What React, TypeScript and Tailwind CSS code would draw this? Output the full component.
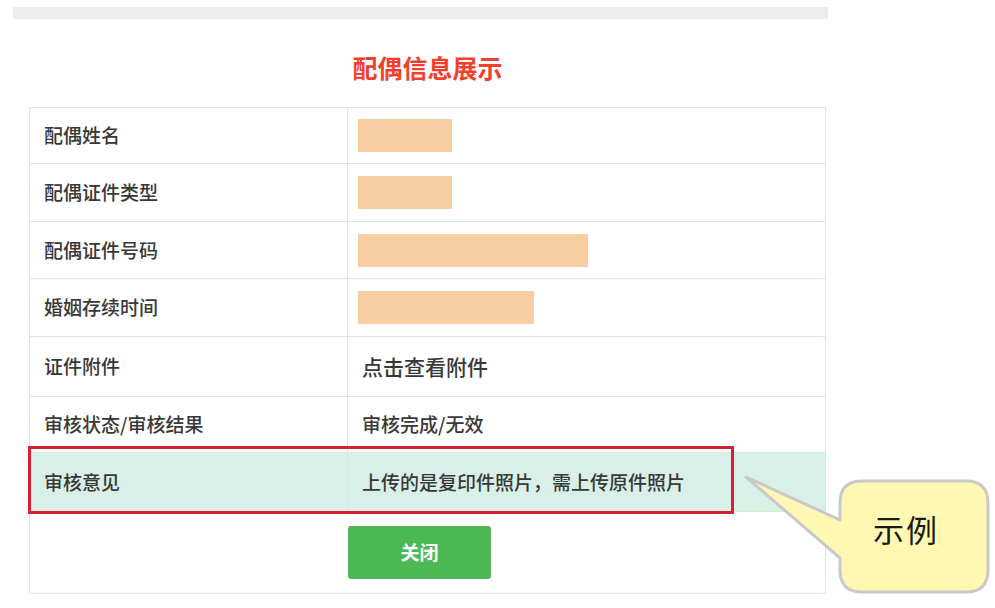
import React from 'react'

const rows = [
  { label: '配偶姓名', h: 'h-[56px]', block: 'w-[94px]' },
  { label: '配偶证件类型', h: 'h-[58px]', block: 'w-[94px]' },
  { label: '配偶证件号码', h: 'h-[57px]', block: 'w-[230px]' },
  { label: '婚姻存续时间', h: 'h-[58px]', block: 'w-[176px]' },
  { label: '证件附件', h: 'h-[60px]', text: '点击查看附件', big: true },
  { label: '审核状态/审核结果', h: 'h-[56px]', text: '审核完成/无效' },
  { label: '审核意见', h: 'h-[59px]', text: '上传的是复印件照片，需上传原件照片', hl: true },
]

export default function App() {
  return (
    <div className="relative w-[995px] h-[608px] overflow-hidden bg-white font-['Microsoft_YaHei','Noto_Sans_CJK_SC',sans-serif] text-[#333]">
      <div className="ml-[13px] mt-[7px] w-[815px]">
        <div className="h-[12px] bg-[#ececec]" />
        <div className="h-[88px] pt-[10px] pl-[14px] flex items-center justify-center text-[25px] font-bold text-[#f2402f]">配偶信息展示</div>
        <div className="ml-[16px] w-[797px] border border-[#d2edd2]">
          {rows.map(r => (
            <div key={r.label} className={`grid grid-cols-[318px_1fr] border-b border-[#d2edd2] ${r.h} ${r.hl ? 'bg-[#d9f0e9]' : ''}`}>
              <div className="flex items-center px-[14px] text-[19px] font-medium text-[#383838] border-r border-[#d2edd2]">{r.label}</div>
              {r.block ? (
                <div className="flex items-center pl-[10px]">
                  <div className={`h-[33px] bg-[#f9cda2] ${r.block}`} />
                </div>
              ) : (
                <div className={`flex items-center pl-[14px] font-medium text-[#383838] ${r.big ? 'text-[21px]' : 'text-[19px]'}`}>{r.text}</div>
              )}
            </div>
          ))}
          <div className="grid grid-cols-[318px_1fr] h-[81px]">
            <div />
            <div className="pt-[14px]">
              <button className="w-[143px] h-[53px] rounded-[3px] bg-[#4cb955] text-white text-[19px] font-bold">关闭</button>
            </div>
          </div>
        </div>
      </div>

      {/* annotation box */}
      <div className="absolute left-[28px] top-[446px] w-[706px] h-[68px] border-[3px] border-[#d22130]" />

      {/* speech bubble */}
      <svg className="absolute left-[740px] top-[470px]" width="255" height="130" viewBox="0 0 255 130">
        <path
          d="M122 11 H226 Q248 11 248 33 V100 Q248 122 226 122 H122 Q100 122 100 100 V88 L6 7 L100 50 V33 Q100 11 122 11 Z"
          fill="#fff7b2"
          stroke="#c9c9c9"
          strokeWidth="3"
          strokeLinejoin="round"
        />
      </svg>
      <div className="absolute left-[832px] top-[481px] w-[148px] h-[96px] flex items-center justify-center text-[31px] text-[#1a1a1a] tracking-[2px]">示例</div>
    </div>
  )
}
